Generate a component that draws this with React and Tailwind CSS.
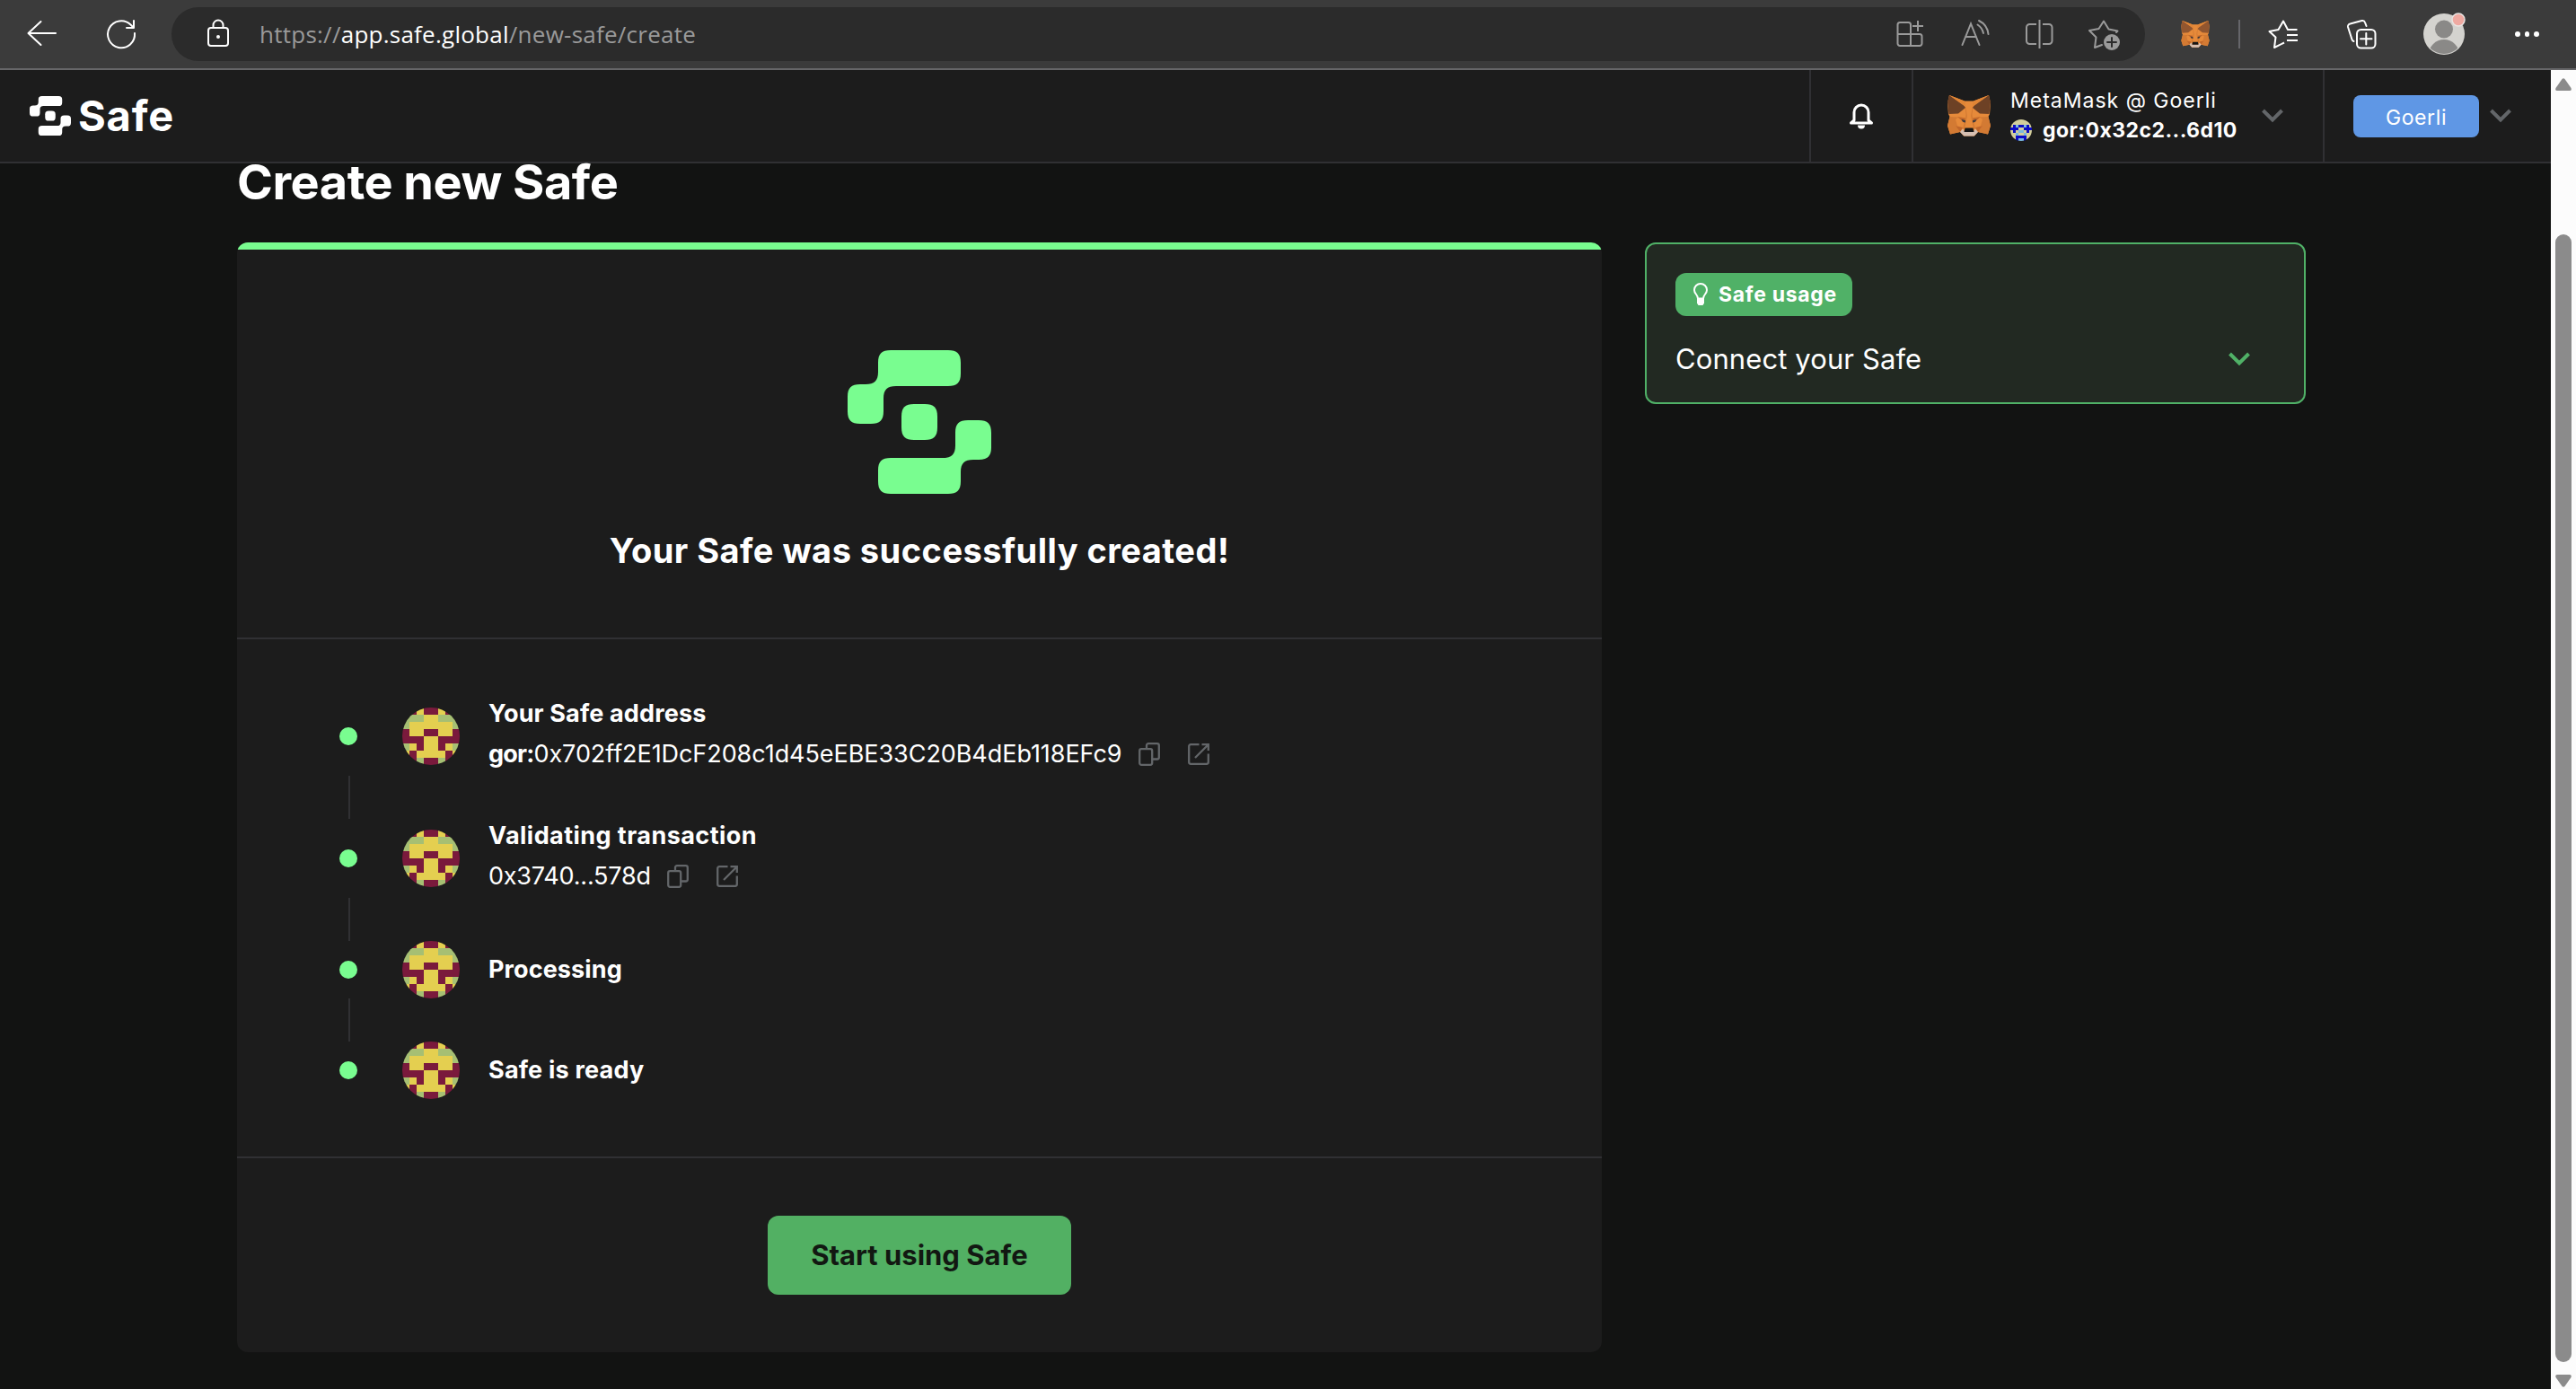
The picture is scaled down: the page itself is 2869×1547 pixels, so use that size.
import React from 'react';

const GREEN = '#79fd90';

function SafeMark({ className, fill }) {
  const half =
    'M48 0H112C122 0 126 4 126 14V26C126 36 122 40 112 40H54C44 40 40 44 40 54V68C40 78 36 82 26 82H14C4 82 0 78 0 68V52C0 42 4 38 14 38H20C30 38 34 34 34 24V14C34 4 38 0 48 0Z';
  return (
    <svg className={className} viewBox="0 0 160 160" preserveAspectRatio="none" fill={fill}>
      <path d={half} />
      <path d={half} transform="rotate(180 80 80)" />
      <path d="M74 60H86C96 60 100 64 100 74V86C100 96 96 100 86 100H74C64 100 60 96 60 86V74C60 64 64 60 74 60Z" />
    </svg>
  );
}

function Fox({ className, ear = '#6d4125' }) {
  return (
    <svg className={className} viewBox="0 0 48 46">
      <path fill="#e68a3a" d="M2 0 19 6.500H29L46 0 48 9 47 21 45.500 24 48 34 45 43.500 34 41 30 45.500H18L14 41 3 43.500 0 34 2.500 24 1 21 0 9Z" />
      <path fill="#d37a33" d="M12 24.500 2.500 24 0 34H11L9 27ZM36 24.500 45.500 24 48 34H37L39 27Z" />
      <path fill="#d37a33" d="M0 34H9L14 41 3 43.500ZM48 34H39L34 41 45 43.500Z" />
      <path fill="#c0672b" d="M9 34 17 36 14 41ZM39 34 31 36 34 41ZM11 24 20 25.500 19 31ZM37 24 28 25.500 29 31Z" />
      <path fill="#d37a33" d="M19 6.500 20.500 22 20 25 17 38 19 37 22 23ZM29 6.500 27.500 22 28 25 31 38 29 37 26 23Z" />
      <path fill={ear} d="M2 0 0 8 1.500 21 12 20.500 20 14 18 11ZM46 0 48 8 46.500 21 36 20.500 28 14 30 11Z" />
      <path fill="#e08535" d="M2 0 19 6.500 20 13ZM46 0 29 6.500 28 13Z" />
      <path fill="#3f3a3c" d="M15.500 27 20 28V30.500L17 29.800ZM32.500 27 28 28V30.500L31 29.800Z" />
      <path fill="#d5bfb2" d="M14 41 17 37.500 19 40.500H29L31 37.500 34 41 29.500 45.500H18.500Z" />
      <path fill="#161616" d="M19.500 36.500H28.500L29.500 41H18.500Z" />
    </svg>
  );
}

const SAFE_PALETTE = { m: '#7a1a3c', y: '#e4cf50', g: '#a6bf73' };
const SAFE_CELLS = ['gmymmymg', 'gggyyggg', 'gyyyyyyg', 'myymmyym', 'mmmyymmm', 'gymyymyg', 'ymyyyymy', 'mmgmmgmm'];
const OWNER_PALETTE = { b: '#d3ce9b', d: '#0d0dc4', l: '#7ab9e0' };
const OWNER_CELLS = ['bbbbbbbb', 'bbbbbbbb', 'bdlddldb', 'dddbbddd', 'bdbllbdb', 'bblbblbb', 'bbddddbb', 'bbdlldbb'];

function Blockie({ className, cells, palette }) {
  return (
    <svg className={className} viewBox="0 0 8 8" shapeRendering="crispEdges">
      {cells.map((row, y) =>
        [...row].map((c, x) => <rect key={x + '-' + y} x={x} y={y} width="1.02" height="1.02" fill={palette[c]} />)
      )}
    </svg>
  );
}

function Chevron({ className }) {
  return (
    <svg className={className} viewBox="0 0 24 16" fill="none" stroke="currentColor" strokeWidth="4">
      <path d="M1.500 2 12 12.500 22.500 2" />
    </svg>
  );
}

function CopyIcon() {
  return (
    <svg className="h-[26px] w-[24px] text-[#636669]" viewBox="0 0 24 26" fill="none" stroke="currentColor" strokeWidth="2.3">
      <rect x="1.200" y="7.200" width="14" height="17.600" rx="2" />
      <path d="M9 6.500V3.200a2 2 0 0 1 2-2H20.800a2 2 0 0 1 2 2V16.500a2 2 0 0 1-2 2H16" />
    </svg>
  );
}

function ExternalIcon() {
  return (
    <svg className="h-[24px] w-[24px] text-[#636669]" viewBox="0 0 24 24" fill="none" stroke="currentColor" strokeWidth="2.3">
      <path d="M12.500 1.200H3.200a2 2 0 0 0-2 2V20.800a2 2 0 0 0 2 2H20.800a2 2 0 0 0 2-2V11.500" />
      <path d="M8 16 22 2M15.500 1.200H22.800V8" />
    </svg>
  );
}

function BrowserBar() {
  return (
    <div className="flex h-[78px] shrink-0 items-center border-b-2 border-[#666668] bg-[#3b3b3b] text-white">
      <svg className="ml-[29px] h-9 w-9" viewBox="0 0 36 36" fill="none" stroke="currentColor" strokeWidth="2" strokeLinecap="round" strokeLinejoin="round">
        <path d="M33 17H3M16.500 4 2.500 17 16.500 30" />
      </svg>
      <svg className="ml-[52px] h-9 w-9" viewBox="0 0 36 36" fill="none" stroke="currentColor" strokeWidth="2" strokeLinecap="round" strokeLinejoin="round">
        <path d="M33 17A15 15 0 1 1 28.500 7.500L32 11M32 3V11H24" />
      </svg>
      <div className="ml-[38px] flex h-[60px] w-[2198px] items-center rounded-full bg-[#2b2b2b] text-[#9a9a9a]">
        <svg className="ml-[38px] h-9 w-[28px] text-white" viewBox="0 0 28 36" fill="none" stroke="currentColor" strokeWidth="2">
          <rect x="3" y="11" width="22" height="20" rx="3" />
          <path d="M8.500 11V8a5.500 5.500 0 0 1 11 0V11" />
          <circle cx="14" cy="21" r="2" fill="currentColor" stroke="none" />
        </svg>
        <div className="ml-[32px] whitespace-nowrap font-['Open_Sans',sans-serif] text-[26px] leading-[40px] tracking-[0.25px]">
          https://<span className="text-white">app.safe.global</span>/new-safe/create
        </div>
        <svg className="ml-auto h-9 w-9" viewBox="0 0 36 36" fill="none" stroke="currentColor" strokeWidth="2">
          <path d="M18 31H6a2.500 2.500 0 0 1-2.500-2.500V7.500A2.500 2.500 0 0 1 6 5H15.500A2.500 2.500 0 0 1 18 7.500V31M3.500 18H28a2.500 2.500 0 0 1 2.500 2.500V28.500A2.500 2.500 0 0 1 28 31H18" />
          <path d="M20 9H32M26 3V15" />
        </svg>
        <svg className="ml-[36px] h-9 w-9" viewBox="0 0 36 36" fill="none" stroke="currentColor" strokeWidth="2" strokeLinecap="round">
          <path d="M3.500 30 13 6.500 22.500 30M7 21H19" />
          <path d="M20.500 7.500A15 15 0 0 1 27 17M22 3A19 19 0 0 1 32.500 18" />
        </svg>
        <svg className="ml-[36px] h-9 w-9" viewBox="0 0 36 36" fill="none" stroke="currentColor" strokeWidth="2">
          <path d="M14 7H6.500A3.500 3.500 0 0 0 3 10.500V25.500A3.500 3.500 0 0 0 6.500 29H14M21 7H28A3.500 3.500 0 0 1 31.500 10.500V25.500A3.500 3.500 0 0 1 28 29H21M17.500 2V34" />
        </svg>
        <svg className="mr-[26px] ml-[35px] h-9 w-[38px]" viewBox="0 0 38 36" fill="none" stroke="currentColor" strokeWidth="2" strokeLinejoin="round" strokeLinecap="round">
          <path d="M16 30 8 33 9.500 21.500 2 14 12.500 12 18 3.500 23.500 12.500 33.500 14.500 32 16" />
          <circle cx="27" cy="27" r="9" fill="currentColor" stroke="none" />
          <path d="M27 22V32M22 27H32" stroke="#2b2b2b" />
        </svg>
      </div>
      <Fox className="ml-[40px] h-[30px] w-8" ear="#92562f" />
      <div className="ml-8 h-8 w-[2px] bg-[#66666a]" />
      <svg className="ml-[30px] h-9 w-9" viewBox="0 0 36 36" fill="none" stroke="currentColor" strokeWidth="2" strokeLinejoin="round">
        <path d="M33.500 13H23L18 3.500 12.500 13 2.500 15 9.500 21.500 8 33 19 27.500M22 19H34M22 25H34" />
      </svg>
      <svg className="ml-[51px] h-9 w-9" viewBox="0 0 36 36" fill="none" stroke="currentColor" strokeWidth="2" strokeLinecap="round">
        <rect x="13" y="13" width="20.500" height="20.500" rx="4.500" />
        <path d="M23.300 17V29.500M17 23.300H29.500M23.500 9 22 5A3 3 0 0 0 18.500 3L5.500 6.500A3 3 0 0 0 3 10L7.500 24A3 3 0 0 0 9.500 26" />
      </svg>
      <svg className="ml-[50px] h-[50px] w-[50px]" viewBox="0 0 50 50">
        <clipPath id="profile"><circle cx="24" cy="25" r="22" /></clipPath>
        <circle cx="24" cy="25" r="23" fill="#d4d3cf" />
        <g clipPath="url(#profile)" fill="#8a8987">
          <circle cx="24" cy="19.500" r="10" />
          <circle cx="24" cy="48" r="17" />
        </g>
        <circle cx="40" cy="9" r="7" fill="#efa9a1" stroke="#e8e4e2" strokeWidth="1.500" />
      </svg>
      <div className="ml-[53px] flex gap-[5px]">
        <i className="size-[5.500px] rounded-full bg-white" />
        <i className="size-[5.500px] rounded-full bg-white" />
        <i className="size-[5.500px] rounded-full bg-white" />
      </div>
    </div>
  );
}

function Header() {
  return (
    <header className="flex h-[104px] items-stretch border-b-2 border-[#303033] bg-[#1c1c1c] text-white">
      <div className="flex items-center pl-[33px]">
        <SafeMark className="h-11 w-[46px]" fill="#fff" />
        <span className="ml-[8px] text-[47px] leading-[60px] font-bold tracking-[0.8px]">Safe</span>
      </div>
      <div className="ml-auto flex w-[114px] items-center justify-center border-l-2 border-[#303033]">
        <svg className="h-[30px] w-[28px]" viewBox="0 0 28 30" fill="none" stroke="currentColor" strokeWidth="3" strokeLinejoin="round">
          <path d="M6 20V11a8 8 0 0 1 16 0V20L25.500 23H2.500Z" />
          <path d="M10 25.500H18A4 4 0 0 1 10 25.500Z" fill="currentColor" stroke="none" />
        </svg>
      </div>
      <div className="flex w-[458px] items-center border-l-2 border-[#303033]">
        <Fox className="ml-[38px] h-[46px] w-12" />
        <div className="ml-[22px] flex w-[280px] flex-col">
          <span className="text-[23px] leading-[32px] tracking-[1px]">MetaMask @ Goerli</span>
          <div className="flex items-center">
            <Blockie className="h-6 w-6 rounded-full" cells={OWNER_CELLS} palette={OWNER_PALETTE} />
            <span className="ml-[12px] text-[23px] leading-[34px] font-bold tracking-[0.45px]">gor:0x32c2...6d10</span>
          </div>
        </div>
        <Chevron className="h-4 w-6 text-[#636669]" />
      </div>
      <div className="flex w-[254px] items-center border-l-2 border-[#303033]">
        <div className="ml-8 flex h-[47px] w-[140px] items-center justify-center rounded-lg bg-[#5f97e5] pt-[3px]">
          <span className="text-[23px] leading-8 tracking-[0.6px]">Goerli</span>
        </div>
        <Chevron className="ml-3 h-4 w-6 text-[#636669]" />
      </div>
    </header>
  );
}

function Step({ tall, title, titleClass, children }) {
  return (
    <div className={tall ? 'flex h-[88px] items-center pl-[114px]' : 'flex h-16 items-center pl-[114px]'}>
      <div className="size-5 rounded-full bg-[#79fd90]" />
      <Blockie className="ml-[50px] size-16 rounded-full" cells={SAFE_CELLS} palette={SAFE_PALETTE} />
      <div className={tall ? 'ml-8 self-start pt-px' : 'ml-8'}>
        <div className="text-[27px] leading-[36px] font-bold"><span className={titleClass}>{title}</span></div>
        {children && <div className="mt-2 flex items-center text-[27px] leading-[38px]">{children}</div>}
      </div>
    </div>
  );
}

function Connector() {
  return <div className="ml-[124px] h-12 w-[2px] bg-[#303033]" />;
}

function CreatedCard() {
  return (
    <section className="w-[1520px] overflow-hidden rounded-xl bg-[#1c1c1c]">
      <div className="h-2 bg-[#79fd90]" />
      <div className="flex h-[434px] flex-col items-center border-b-2 border-[#303033] pt-28">
        <SafeMark className="size-40" fill={GREEN} />
        <h2 className="mt-[39px] text-[38px] leading-[48px] font-bold tracking-[0.47px]">Your Safe was successfully created!</h2>
      </div>
      <div className="border-b-2 border-[#303033] py-16">
        <Step tall title="Your Safe address" titleClass="tracking-[0.15px]">
          <b className="font-bold tracking-[-0.8px]">gor:</b>
          <span className="mr-[19px] tracking-[-0.06px]">0x702ff2E1DcF208c1d45eEBE33C20B4dEb118EFc9</span>
          <CopyIcon />
          <span className="w-[31px]" />
          <ExternalIcon />
        </Step>
        <Connector />
        <Step tall title="Validating transaction" titleClass="tracking-[0.44px]">
          <span className="mr-[18px] tracking-[-0.2px]">0x3740...578d</span>
          <CopyIcon />
          <span className="w-[31px]" />
          <ExternalIcon />
        </Step>
        <Connector />
        <Step title="Processing" titleClass="tracking-[0.1px]" />
        <Connector />
        <Step title="Safe is ready" titleClass="tracking-[0.2px]" />
      </div>
      <div className="flex h-[216px] items-start justify-center pt-16">
        <button className="h-[88px] w-[338px] rounded-xl bg-[#52b063] text-[31px] leading-[40px] font-bold text-[#121812]">Start using Safe</button>
      </div>
    </section>
  );
}

function UsageCard() {
  return (
    <aside className="flex h-[180px] w-[736px] flex-col rounded-xl border-2 border-[#50b167] bg-[#222922] px-8 pt-8">
      <div className="flex h-12 w-[197px] items-center rounded-xl bg-[#50b167]">
        <svg className="ml-[19px] h-[26px] w-[18px]" viewBox="0 0 18 26" fill="none" stroke="currentColor" strokeWidth="2">
          <path d="M6 17.500C6 13 2 12.500 2 8a7 7 0 0 1 14 0C16 12.500 12 13 12 17.500Z" />
          <path d="M5 17H13V22.500L11.500 25H6.500L5 22.500Z" fill="currentColor" stroke="none" />
        </svg>
        <span className="ml-[11px] text-[23px] leading-8 font-bold tracking-[0.7px]">Safe usage</span>
      </div>
      <div className="mt-[26px] flex items-center">
        <span className="w-[616px] text-[31px] leading-[44px] tracking-[0.1px]">Connect your Safe</span>
        <Chevron className="h-4 w-6 text-[#50b167]" />
      </div>
    </aside>
  );
}

function Scrollbar() {
  return (
    <div className="flex w-7 flex-col items-center bg-[#fcfcfc]">
      <svg className="mt-[9px] h-[14px] w-[18px]" viewBox="0 0 18 14" fill="#8b8b8b"><path d="M7.500 1Q9-.5 10.500 1L17.500 11Q18.500 14 16 14H2Q-.5 14 .5 11Z" /></svg>
      <div className="mt-[160px] h-[1256px] w-[18px] rounded-full bg-[#8b8b8b]" />
      <svg className="mt-[14px] h-[14px] w-[18px]" viewBox="0 0 18 14" fill="#8b8b8b"><path d="M7.500 13Q9 14.500 10.500 13L17.500 3Q18.500 0 16 0H2Q-.5 0 .5 3Z" /></svg>
    </div>
  );
}

export default function App() {
  return (
    <div className="flex h-[1547px] w-[2869px] flex-col overflow-hidden bg-[#121312] font-['Inter',sans-serif] text-white">
      <BrowserBar />
      <div className="flex min-h-0 flex-1">
        <div className="flex w-[2841px] flex-col">
          <Header />
          <main className="pt-px pl-[264px]">
            <h1 className="text-[54px] leading-[40px] font-bold tracking-[-0.5px]">Create new Safe</h1>
            <div className="mt-[47px] flex items-start gap-12">
              <CreatedCard />
              <UsageCard />
            </div>
          </main>
        </div>
        <Scrollbar />
      </div>
    </div>
  );
}
